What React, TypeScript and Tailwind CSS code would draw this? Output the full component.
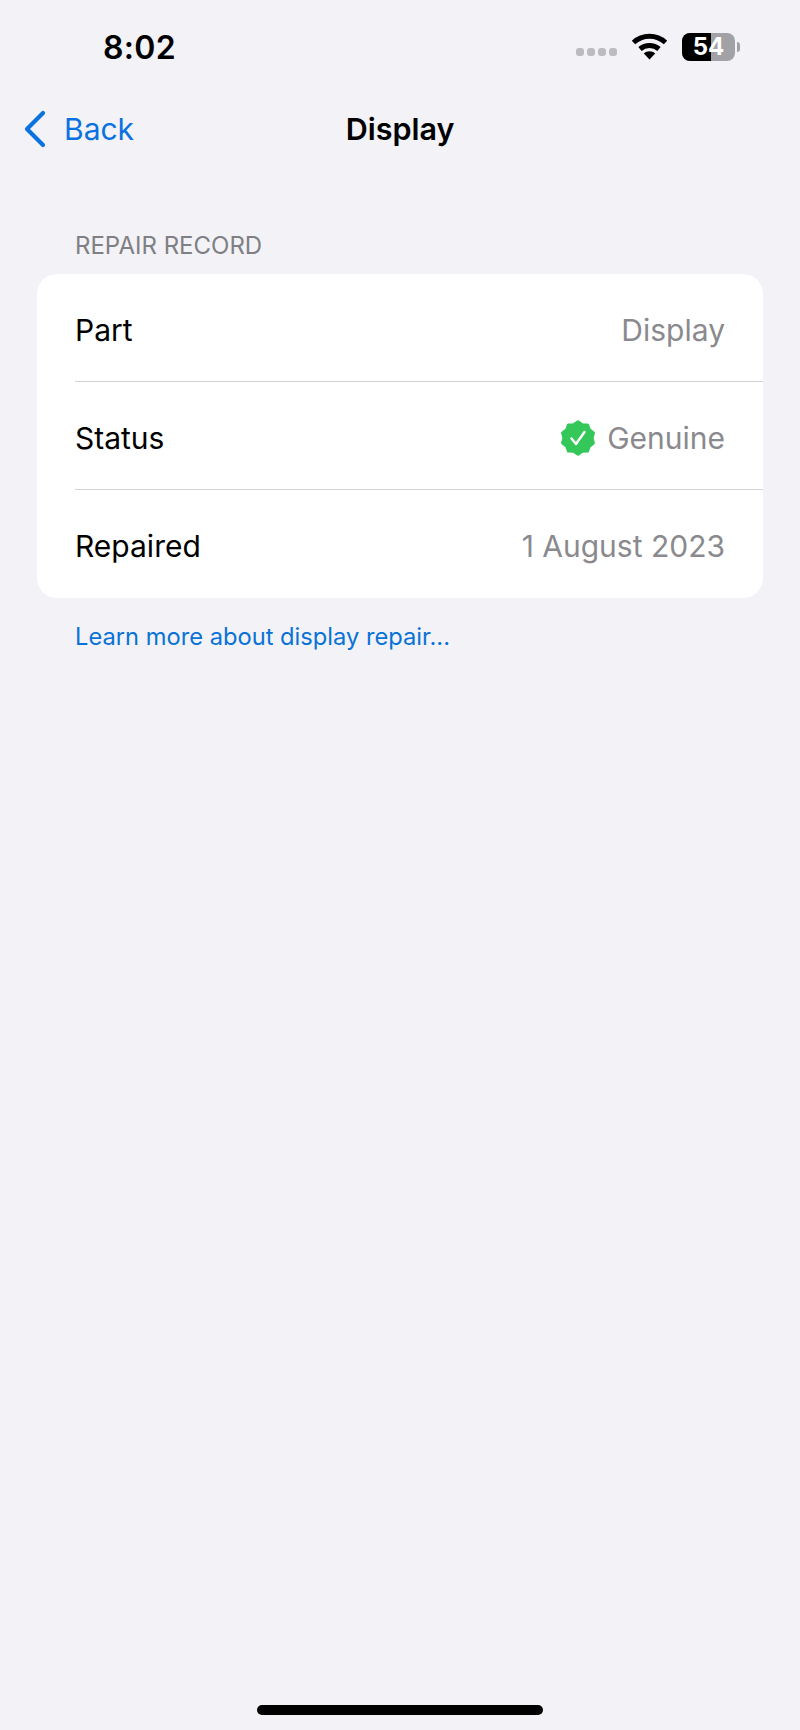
import React from "react";

// 10-lobed badge outline for the verified seal, softened by the round stroke join
const sealPoints = Array.from({ length: 20 }, (_, i) => {
  const r = i % 2 === 0 ? 16.2 : 14;
  const a = (i * Math.PI) / 10 - Math.PI / 2;
  return `${(18 + r * Math.cos(a)).toFixed(2)},${(18 + r * Math.sin(a)).toFixed(2)}`;
}).join(" ");

function StatusBar() {
  return (
    <div className="h-[94px] flex items-center justify-between pl-[103px] pr-[60px]">
      <span className="text-[32px] leading-[38px] mt-[2px] font-semibold text-black tracking-[0.3px]">8:02</span>
      <div className="flex items-center">
        <div className="flex gap-[3px] mt-[10px] mr-[14px]">
          <span className="w-[8px] h-[8px] rounded-[3px] bg-[#bcbcc0]" />
          <span className="w-[8px] h-[8px] rounded-[3px] bg-[#bcbcc0]" />
          <span className="w-[8px] h-[8px] rounded-[3px] bg-[#bcbcc0]" />
          <span className="w-[8px] h-[8px] rounded-[3px] bg-[#bcbcc0]" />
        </div>
        <svg width="37" height="27" viewBox="0 0 37 27" className="mr-[14px] -mt-[2px]">
          <path d="M2.500 9.500C11.500 1.200 25.500 1.200 34.500 9.500" fill="none" stroke="#000" strokeWidth="5" />
          <path d="M9 16C14.500 11.200 22.500 11.200 28 16" fill="none" stroke="#000" strokeWidth="5" />
          <path d="M12.800 20.600C16 17.500 21 17.500 24.200 20.600L18.500 26.500Z" fill="#000" />
        </svg>
        <div className="relative w-[53px] h-[28px] rounded-[8px] bg-[#a2a2a6]">
          <div className="h-full w-[29px] rounded-l-[8px] bg-black" />
          <span className="absolute inset-0 flex items-center justify-center text-white text-[24px] leading-none font-bold">54</span>
        </div>
        <span className="w-[3px] h-[10px] ml-[2px] rounded-r-[3px] bg-[#a2a2a6]" />
      </div>
    </div>
  );
}

function NavBar() {
  return (
    <div className="relative h-[70px] flex items-center justify-center">
      <div className="absolute left-[23px] top-0 h-full flex items-center gap-[18px] text-[#0a72e0]">
        <svg width="23" height="38" viewBox="0 0 23 38">
          <path d="M20 3L4 19L20 35" fill="none" stroke="currentColor" strokeWidth="4.200" strokeLinecap="round" strokeLinejoin="round" />
        </svg>
        <span className="text-[30px]">Back</span>
      </div>
      <span className="text-[30.500px] font-semibold text-black">Display</span>
    </div>
  );
}

function Row({ label, children, last }: { label: string; children: React.ReactNode; last?: boolean }) {
  return (
    <div className={`h-[108px] ml-[38px] pr-[38px] pt-[5px] flex items-center justify-between ${last ? "" : "border-b border-[#d3d3d6]"}`}>
      <span className="text-[30px] text-black">{label}</span>
      {children}
    </div>
  );
}

export default function App() {
  return (
    <div className="w-[800px] h-[1730px] bg-[#f2f2f7] flex flex-col font-['Inter',sans-serif]">
      <StatusBar />
      <NavBar />
      <div className="flex-1 flex flex-col">
        <div className="mt-[68px] ml-[75px] text-[24px] leading-[28px] text-[#7f7f84]">REPAIR RECORD</div>
        <div className="mt-[14px] mx-[37px] bg-white rounded-[20px] overflow-hidden">
          <Row label="Part">
            <span className="text-[30px] text-[#8a8a8e]">Display</span>
          </Row>
          <Row label="Status">
            <div className="flex items-center gap-[11px]">
              <svg width="36" height="36" viewBox="0 0 36 36">
                <polygon points={sealPoints} fill="#34c759" stroke="#34c759" strokeWidth="3" strokeLinejoin="round" />
                <path d="M11.500 18.500l4.500 5.500 8.500-12" fill="none" stroke="#fff" strokeWidth="2.400" strokeLinecap="round" strokeLinejoin="round" />
              </svg>
              <span className="text-[30px] text-[#8a8a8e]">Genuine</span>
            </div>
          </Row>
          <Row label="Repaired" last>
            <span className="text-[30px] text-[#8a8a8e]">1 August 2023</span>
          </Row>
        </div>
        <div className="mt-[21px] ml-[75px] text-[23.700px] leading-[36px] text-[#0a72d6]">Learn more about display repair...</div>
      </div>
      <div className="h-[25px] flex justify-center">
        <span className="w-[286px] h-[10px] rounded-full bg-black" />
      </div>
    </div>
  );
}
